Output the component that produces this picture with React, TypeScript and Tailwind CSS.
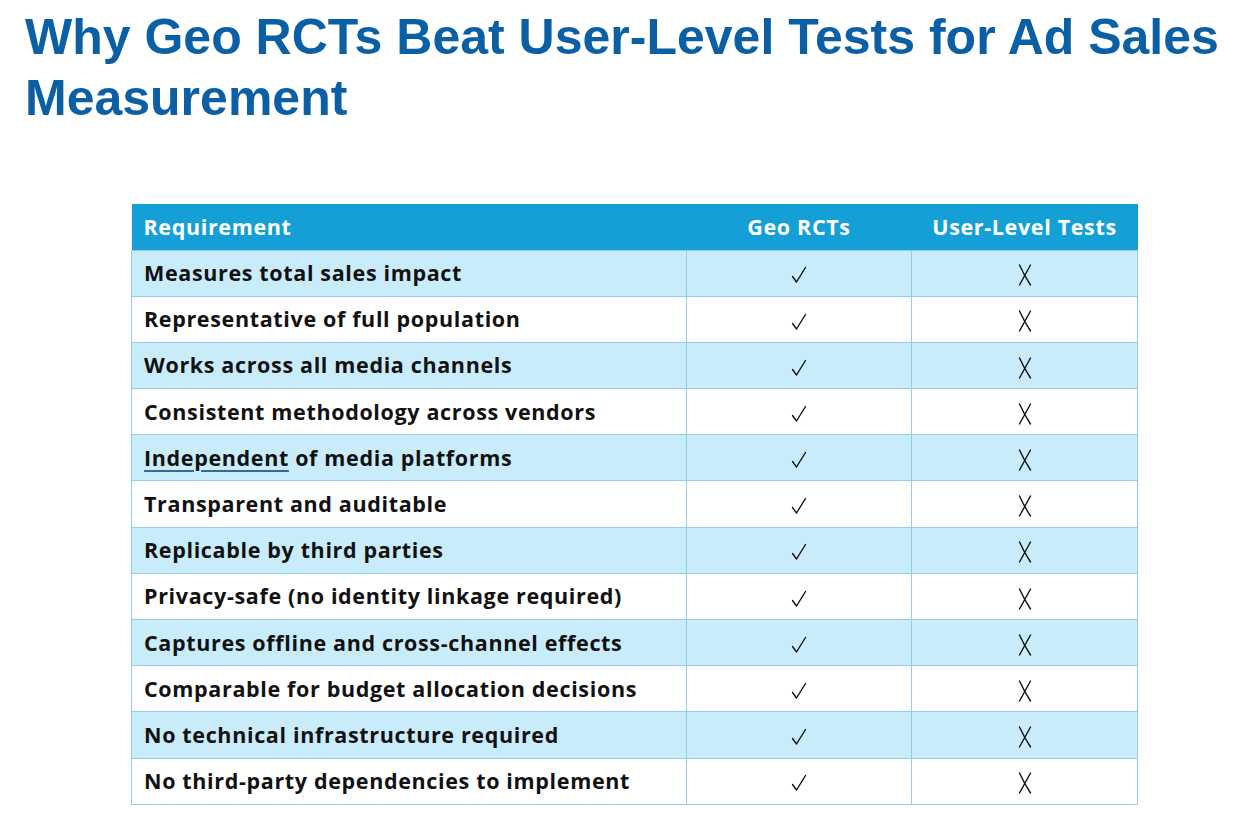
import React from 'react';

const rows = [
  'Measures total sales impact',
  'Representative of full population',
  'Works across all media channels',
  'Consistent methodology across vendors',
  'Independent of media platforms',
  'Transparent and auditable',
  'Replicable by third parties',
  'Privacy-safe (no identity linkage required)',
  'Captures offline and cross-channel effects',
  'Comparable for budget allocation decisions',
  'No technical infrastructure required',
  'No third-party dependencies to implement',
];

const Check = () => (
  <svg width="16" height="18" viewBox="0 0 16 18" className="inline-block">
    <path d="M1.5 10.5 L5.5 16 L14.5 1.5" fill="none" stroke="#111" strokeWidth="1.4" strokeLinecap="round" strokeLinejoin="round" />
  </svg>
);

const Cross = () => (
  <svg width="14" height="22" viewBox="0 0 14 22" className="inline-block">
    <path d="M1.5 1 Q6 11 12.5 21 M12.5 1 Q7 11 1.5 21" fill="none" stroke="#111" strokeWidth="1.4" strokeLinecap="round" />
  </svg>
);

export default function App() {
  return (
    <div className="w-[1248px] h-[830px] bg-white overflow-hidden">
      <h1 className="pl-[25px] pt-[7px] text-[50px] leading-[61px] font-bold text-[#0b5fa5] font-['Liberation_Sans',Arial,sans-serif]">
        Why Geo RCTs Beat User-Level Tests for Ad Sales Measurement
      </h1>

      <table className="mt-[75px] ml-[131px] w-[1006px] table-fixed border-collapse font-['Open_Sans',sans-serif] text-[21.5px] leading-[26px] font-bold tracking-[0.65px]">
        <colgroup>
          <col className="w-[555px]" />
          <col className="w-[225px]" />
          <col className="w-[226px]" />
        </colgroup>
        <thead>
          <tr className="h-[46px] bg-[#159fd7] text-white">
            <th className="pl-[12px] text-left font-bold">Requirement</th>
            <th className="text-center font-bold">Geo RCTs</th>
            <th className="text-center font-bold">User-Level Tests</th>
          </tr>
        </thead>
        <tbody className="text-[#111]">
          {rows.map((r, i) => (
            <tr key={r} className={`h-[46.2px] ${i % 2 === 0 ? 'bg-[#c9ecfa]' : 'bg-white'}`}>
              <td className="border border-[#93cde8] pl-[12px]">
                {i === 4 ? (
                  <>
                    <span className="underline decoration-[#3d6690] decoration-[1.5px] underline-offset-[4px]">Independent</span>
                    {' of media platforms'}
                  </>
                ) : (
                  r
                )}
              </td>
              <td className="border border-[#93cde8] text-center align-middle">
                <Check />
              </td>
              <td className="border border-[#93cde8] text-center align-middle">
                <Cross />
              </td>
            </tr>
          ))}
        </tbody>
      </table>
    </div>
  );
}
